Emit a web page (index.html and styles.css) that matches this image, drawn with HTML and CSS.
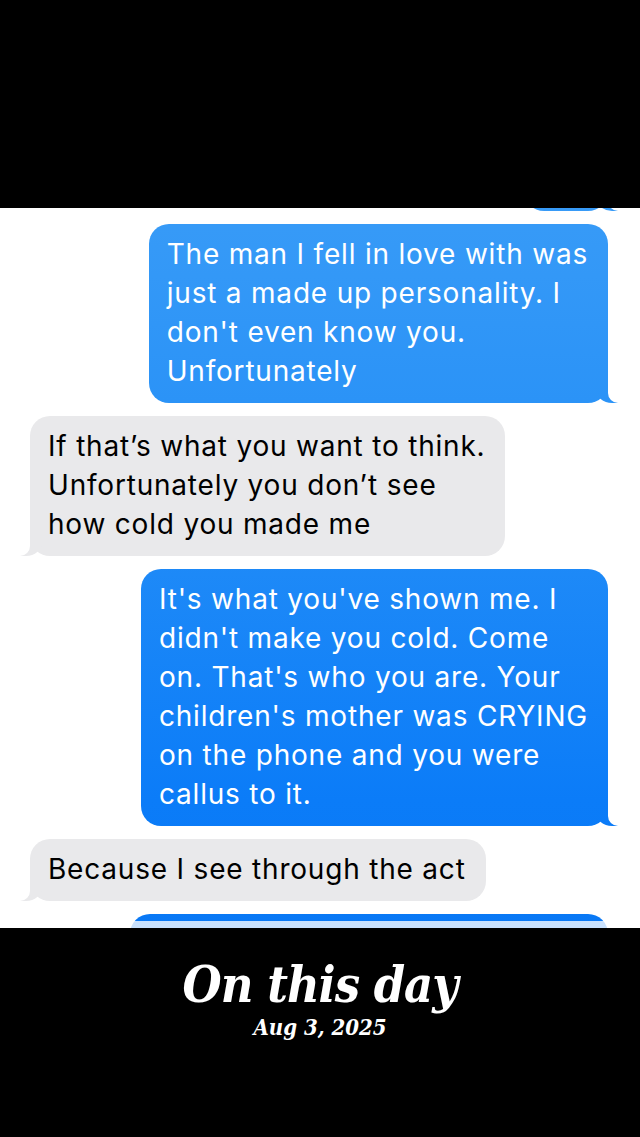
FILE: index.html
```html
<!DOCTYPE html>
<html lang="en">
<head>
    <meta charset="UTF-8">
    <meta name="viewport" content="width=device-width, initial-scale=1.0">
    <title>On this day</title>
    <link rel="stylesheet" href="styles.css">
</head>
<body>
    <div class="top-bar"></div>

    <main class="thread">
        <div class="bubble sent clipped-top" aria-hidden="true"></div>

        <div class="bubble sent">
            The man I fell in love with was<br>
            just a made up personality. I<br>
            don't even know you.<br>
            Unfortunately
        </div>

        <div class="bubble received">
            If that’s what you want to think.<br>
            Unfortunately you don’t see<br>
            how cold you made me
        </div>

        <div class="bubble sent">
            It's what you've shown me. I<br>
            didn't make you cold. Come<br>
            on. That's who you are. Your<br>
            children's mother was CRYING<br>
            on the phone and you were<br>
            callus to it.
        </div>

        <div class="bubble received">
            Because I see through the act
        </div>

        <div class="bubble sent clipped-bottom" aria-hidden="true"></div>
    </main>

    <footer class="caption">
        <h1>On this day</h1>
        <p>Aug 3, 2025</p>
    </footer>
</body>
</html>
```

FILE: styles.css
```css
* {
    margin: 0;
    padding: 0;
    box-sizing: border-box;
}

body {
    background: #000;
    width: 640px;
    min-height: 1137px;
    font-family: Inter, Roboto, "Liberation Sans", sans-serif;
}

.top-bar {
    height: 208px;
}

.thread {
    position: relative;
    height: 720px;
    overflow: hidden;
    background: #fff;
    padding: 0 32px 0 30px;
    display: flex;
    flex-direction: column;
    gap: 13px;
}

/* soft fade where the screenshot was cut */
.thread::after {
    content: "";
    position: absolute;
    left: 0;
    right: 0;
    bottom: 0;
    height: 7px;
    background: rgba(255, 255, 255, 0.78);
    z-index: 2;
}

.bubble {
    position: relative;
    z-index: 0;
    width: fit-content;
    padding: 11px 20px 12px 18px;
    border-radius: 20px;
    font-size: 28px;
    line-height: 39px;
    letter-spacing: 0.8px;
    white-space: nowrap;
}

.sent {
    align-self: flex-end;
    color: #fff;
    background: linear-gradient(180deg, #45a3f7 0px, #2b93f7 400px, #0b7cf8 800px, #0672f0 1137px);
    background-attachment: fixed;
}

.received {
    align-self: flex-start;
    color: #000;
    background: #e9e9eb;
}

.bubble::before,
.bubble::after {
    content: "";
    position: absolute;
    bottom: 0;
    height: 20px;
    z-index: -1;
}

.sent::before {
    right: -10px;
    width: 22px;
    background: inherit;
    background-attachment: fixed;
    border-bottom-left-radius: 16px 14px;
}

.sent::after {
    right: -26px;
    width: 26px;
    background: #fff;
    border-bottom-left-radius: 10px;
}

.received::before {
    left: -10px;
    width: 22px;
    background: #e9e9eb;
    border-bottom-right-radius: 16px 14px;
}

.received::after {
    left: -26px;
    width: 26px;
    background: #fff;
    border-bottom-right-radius: 10px;
}

.clipped-top {
    width: 84px;
    height: 40px;
    margin-top: -37px;
    flex-shrink: 0;
}

.clipped-bottom {
    width: 478px;
    height: 120px;
    flex-shrink: 0;
}

.caption {
    color: #fff;
    text-align: center;
    padding-top: 30px;
    font-family: "DejaVu Serif Condensed", "DejaVu Serif", serif;
    font-style: italic;
    font-weight: bold;
}

.caption h1 {
    font-size: 50px;
    line-height: 54px;
    letter-spacing: -1px;
}

.caption p {
    margin-top: 4px;
    font-size: 22px;
    line-height: 23px;
}
```
